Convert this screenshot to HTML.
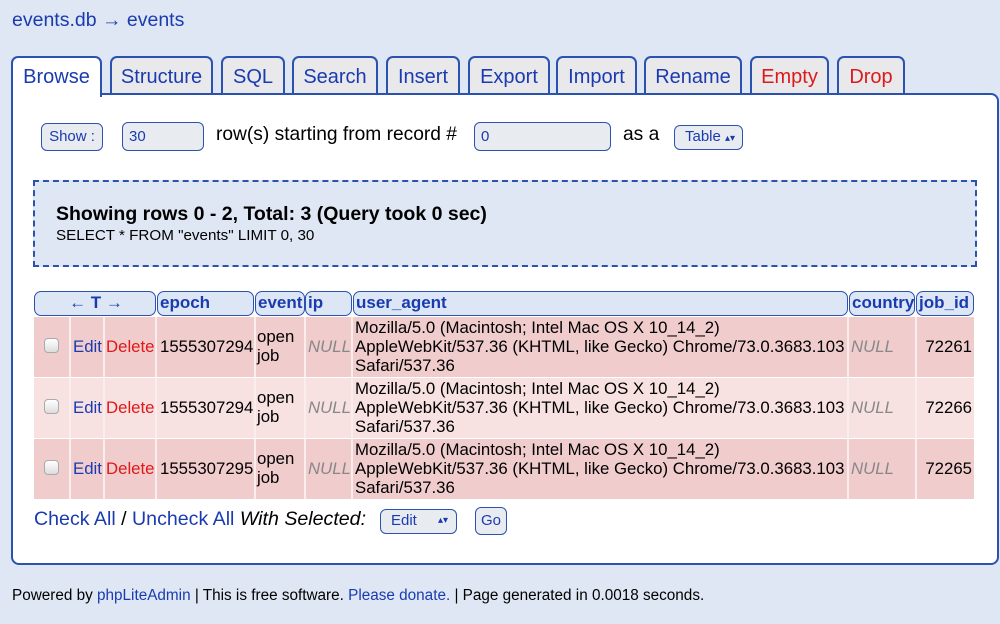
<!DOCTYPE html>
<html><head><meta charset="utf-8"><style>
*{margin:0;padding:0;box-sizing:border-box}
body{width:1000px;height:624px;background:#dee7f3;font-family:"Liberation Sans",Arial,sans-serif;position:relative;overflow:hidden;color:#000}
.a{position:absolute;white-space:nowrap}
.blue{color:#1a3bb0}.red{color:#dd1a1a}
.tab{position:absolute;top:56px;height:38px;border:2px solid #2c52b0;border-bottom:none;border-radius:7px 7px 0 0;background:#e9e9ec;font-size:20px;text-align:center;line-height:38px;color:#1a3bb0}
#box{position:absolute;left:11px;top:93px;width:988px;height:472px;background:#fff;border:2px solid #2c52b0;border-radius:0 8px 8px 8px}
.btn{position:absolute;border:1.5px solid #2c52b0;border-radius:6px;background:#e8ebf0;color:#1a3bb0;font-size:15px}
.th{position:absolute;top:291px;height:25px;border:1.5px solid #2c52b0;border-radius:7px;background:#dde6f4;color:#1a3bb0;font-weight:bold;font-size:17px;line-height:22px;padding-left:2px}
.row{position:absolute;left:34px;width:940px;height:60px}
.c{position:absolute;top:0;height:60px;border-right:2px solid #f9eded;font-size:16.8px;line-height:19px;white-space:nowrap}
.nul{color:#888;font-style:italic}
.cb{position:absolute;width:15px;height:15px;border:1px solid #aaa;border-radius:4px;background:linear-gradient(#fff,#ddd);left:10px;top:21px}
</style></head><body>
<div class="a blue" style="left:12px;top:9px;font-size:19.5px">events.db → events</div>
<div class="tab" style="left:110px;width:103px">Structure</div>
<div class="tab" style="left:221px;width:64px">SQL</div>
<div class="tab" style="left:292px;width:86px">Search</div>
<div class="tab" style="left:386px;width:74px">Insert</div>
<div class="tab" style="left:468px;width:82px">Export</div>
<div class="tab" style="left:556px;width:81px">Import</div>
<div class="tab" style="left:644px;width:98px">Rename</div>
<div class="tab red" style="left:750px;width:79px;color:#dd1a1a">Empty</div>
<div class="tab" style="left:837px;width:68px;color:#dd1a1a">Drop</div>
<div id="box"></div>
<div class="tab" style="left:11px;width:91px;height:41px;background:#fff;z-index:2">Browse</div>

<div class="btn" style="left:41px;top:123px;width:62px;height:28px;line-height:25px;text-align:center">Show :</div>
<div class="btn" style="left:122px;top:122px;width:82px;height:29px;line-height:27px;padding-left:6px">30</div>
<div class="a" style="left:216px;top:124px;font-size:19.2px">row(s) starting from record #</div>
<div class="btn" style="left:474px;top:122px;width:137px;height:29px;line-height:27px;padding-left:6px">0</div>
<div class="a" style="left:623px;top:124px;font-size:19.2px">as a</div>
<div class="btn" style="left:674px;top:125px;width:69px;height:25px;line-height:22px;padding-left:10px">Table <span style="font-size:10px">▴▾</span></div>

<div class="a" style="left:33px;top:180px;width:944px;height:87px;border:2px dashed #2c52b0;background:#dee7f3"></div>
<div class="a" style="left:56px;top:203px;font-size:19.5px;font-weight:bold">Showing rows 0 - 2, Total: 3 (Query took 0 sec)</div>
<div class="a" style="left:56px;top:227px;font-size:15.2px">SELECT * FROM "events" LIMIT 0, 30</div>

<div class="th" style="left:34px;width:122px;text-align:center">←&nbsp;T&nbsp;→</div>
<div class="th" style="left:157px;width:97px">epoch</div>
<div class="th" style="left:255px;width:50px">event</div>
<div class="th" style="left:305px;width:47px">ip</div>
<div class="th" style="left:353px;width:495px">user_agent</div>
<div class="th" style="left:849px;width:66px">country</div>
<div class="th" style="left:916px;width:58px">job_id</div>

<div class="row" style="top:317px;background:#f0cccd">
<div class="c" style="left:0;width:37px"><div class="cb"></div></div>
<div class="c blue" style="left:37px;width:34px;padding:20px 0 0 2px">Edit</div>
<div class="c red" style="left:71px;width:52px;padding:20px 0 0 1px">Delete</div>
<div class="c" style="left:123px;width:99px;padding:20px 0 0 3px">1555307294</div>
<div class="c" style="left:222px;width:50px;padding:10px 0 0 1px">open<br>job</div>
<div class="c nul" style="left:272px;width:47px;padding:20px 0 0 2px">NULL</div>
<div class="c" style="left:319px;width:496px;padding:1px 0 0 2px">Mozilla/5.0 (Macintosh; Intel Mac OS X 10_14_2)<br>AppleWebKit/537.36 (KHTML, like Gecko) Chrome/73.0.3683.103<br>Safari/537.36</div>
<div class="c nul" style="left:815px;width:68px;padding:20px 0 0 2px">NULL</div>
<div class="c" style="left:883px;width:57px;padding:20px 2px 0 0;text-align:right;border:none">72261</div>
</div>
<div class="row" style="top:378px;background:#f7e1e1">
<div class="c" style="left:0;width:37px"><div class="cb"></div></div>
<div class="c blue" style="left:37px;width:34px;padding:20px 0 0 2px">Edit</div>
<div class="c red" style="left:71px;width:52px;padding:20px 0 0 1px">Delete</div>
<div class="c" style="left:123px;width:99px;padding:20px 0 0 3px">1555307294</div>
<div class="c" style="left:222px;width:50px;padding:10px 0 0 1px">open<br>job</div>
<div class="c nul" style="left:272px;width:47px;padding:20px 0 0 2px">NULL</div>
<div class="c" style="left:319px;width:496px;padding:1px 0 0 2px">Mozilla/5.0 (Macintosh; Intel Mac OS X 10_14_2)<br>AppleWebKit/537.36 (KHTML, like Gecko) Chrome/73.0.3683.103<br>Safari/537.36</div>
<div class="c nul" style="left:815px;width:68px;padding:20px 0 0 2px">NULL</div>
<div class="c" style="left:883px;width:57px;padding:20px 2px 0 0;text-align:right;border:none">72266</div>
</div>
<div class="row" style="top:439px;background:#f0cccd">
<div class="c" style="left:0;width:37px"><div class="cb"></div></div>
<div class="c blue" style="left:37px;width:34px;padding:20px 0 0 2px">Edit</div>
<div class="c red" style="left:71px;width:52px;padding:20px 0 0 1px">Delete</div>
<div class="c" style="left:123px;width:99px;padding:20px 0 0 3px">1555307295</div>
<div class="c" style="left:222px;width:50px;padding:10px 0 0 1px">open<br>job</div>
<div class="c nul" style="left:272px;width:47px;padding:20px 0 0 2px">NULL</div>
<div class="c" style="left:319px;width:496px;padding:1px 0 0 2px">Mozilla/5.0 (Macintosh; Intel Mac OS X 10_14_2)<br>AppleWebKit/537.36 (KHTML, like Gecko) Chrome/73.0.3683.103<br>Safari/537.36</div>
<div class="c nul" style="left:815px;width:68px;padding:20px 0 0 2px">NULL</div>
<div class="c" style="left:883px;width:57px;padding:20px 2px 0 0;text-align:right;border:none">72265</div>
</div>

<div class="a" style="left:34px;top:508px;font-size:19.6px"><span class="blue">Check All</span> / <span class="blue">Uncheck All</span> <i>With Selected:</i></div>
<div class="btn" style="left:380px;top:509px;width:77px;height:25px;line-height:22px;padding-left:10px">Edit<span style="position:absolute;right:8px;font-size:10px">▴▾</span></div>
<div class="btn" style="left:475px;top:507px;width:32px;height:28px;line-height:25px;text-align:center">Go</div>

<div class="a" style="left:12px;top:587px;font-size:15.3px">Powered by <span class="blue">phpLiteAdmin</span> | This is free software. <span class="blue">Please donate.</span> | Page generated in 0.0018 seconds.</div>
</body></html>
